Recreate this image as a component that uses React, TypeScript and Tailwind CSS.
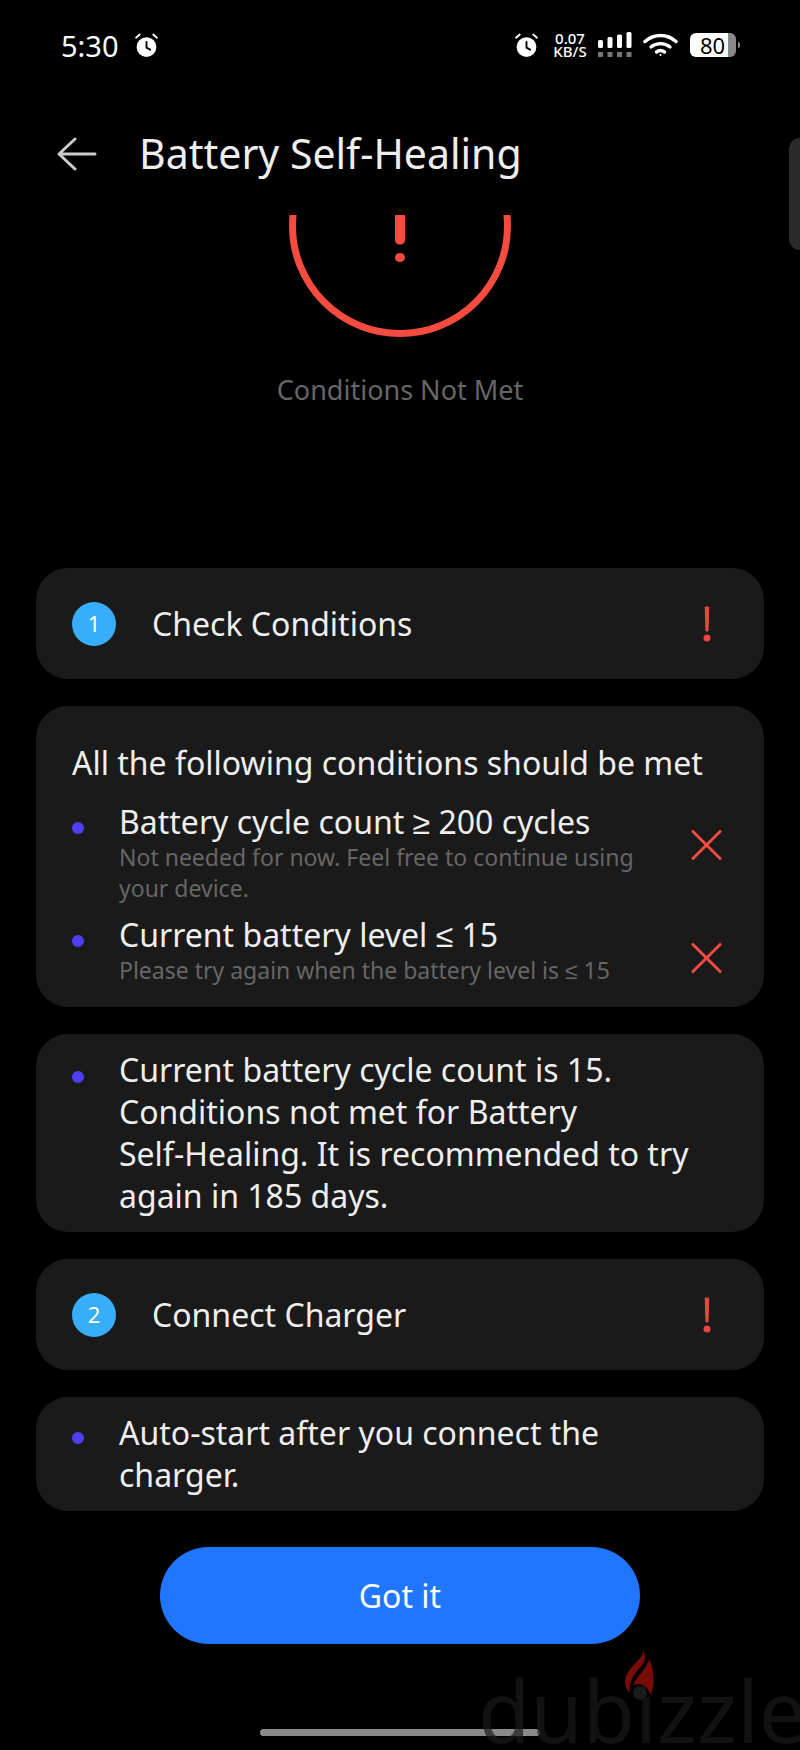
const sans = 'font-["Noto_Sans",sans-serif]';

const AlarmIcon = ({ className = '' }: { className?: string }) => (
  <svg viewBox="0 0 24 24" className={className}>
    <circle cx="12" cy="13.5" r="9.5" fill="#fff" />
    <path d="M12 8.5V14l3.5 2" fill="none" stroke="#000" strokeWidth="1.8" strokeLinecap="round" />
    <path d="M2 4.5 5.5 1.5M22 4.5 18.5 1.5" stroke="#fff" strokeWidth="1.8" strokeLinecap="round" />
  </svg>
);

const StatusBar = () => (
  <div className="flex h-[90px] items-center pl-[61px] pr-[60px] text-white">
    <span className="text-[29px] leading-none">5:30</span>
    <AlarmIcon className="ml-[15px] h-[25px] w-[25px]" />
    <AlarmIcon className="ml-auto h-[25px] w-[25px]" />
    <div className="ml-[14px] flex w-[34px] flex-col items-center whitespace-nowrap text-[15px] font-medium leading-[13px]">
      <span>0.07</span>
      <span>KB/S</span>
    </div>
    <svg viewBox="0 0 34 26" className="ml-[11px] h-[26px] w-[34px]">
      <rect x="0" y="8" width="5" height="8" rx="1.5" fill="#fff" />
      <rect x="9.5" y="5" width="5" height="11" rx="1.5" fill="#fff" />
      <rect x="19" y="2.5" width="5" height="13.5" rx="1.5" fill="#fff" />
      <rect x="28.5" y="0" width="5" height="16" rx="1.5" fill="#fff" />
      <rect x="0" y="20" width="5" height="5" fill="#777" />
      <rect x="9.5" y="20" width="5" height="5" fill="#777" />
      <rect x="19" y="20" width="5" height="5" fill="#777" />
      <rect x="28.5" y="20" width="5" height="5" fill="#777" />
    </svg>
    <svg viewBox="0 0 35 24" className="ml-[11px] h-[24px] w-[35px]" fill="none" stroke="#fff" strokeWidth="3.4" strokeLinecap="round">
      <path d="M2 8.5C11 .5 24 .5 33 8.5" />
      <path d="M8 14c5.500-4.500 13.500-4.500 19 0" />
      <path d="M13.500 19c2.500-1.800 5.500-1.800 8 0" />
      <circle cx="17.500" cy="22" r="1" fill="#fff" stroke="none" />
    </svg>
    <div className="ml-[12px] h-[24px] w-[46px] rounded-[6px] border-r-[8px] border-[#888] bg-white pl-[10px] text-[22px] leading-[24px] text-black">
      80
    </div>
    <div className="ml-[2px] h-[6px] w-[2px] rounded-r-full bg-[#888]" />
  </div>
);

const Ring = () => (
  <div className="flex flex-col items-center">
    <svg viewBox="0 0 222 122" className="h-[122px] w-[222px]">
      <circle cx="111" cy="11" r="107.500" fill="none" stroke="#f64c40" strokeWidth="7" />
      <path d="M106 0h10v25c0 6-10 6-10 0Z" fill="#f64c40" />
      <ellipse cx="111" cy="42.500" rx="5" ry="4.500" fill="#f64c40" />
    </svg>
    <p className="mt-[35px] text-[27px] leading-[36px] text-[#666]">Conditions Not Met</p>
  </div>
);

const StepCard = ({ num, label }: { num: number; label: string }) => (
  <div className="flex h-[111px] items-center rounded-[32px] bg-[#1a1a1a] pl-[36px] pr-[53px]">
    <div className="flex h-[44px] w-[44px] items-center justify-center rounded-full bg-[#38aefb] text-[22px] text-white">{num}</div>
    <span className="ml-[36px] flex-1 text-[32px] text-[#eee]">{label}</span>
    <svg viewBox="0 0 8 36" className="h-[36px] w-[8px]">
      <path d="M2.200 1h3.600L5 25H3Z" fill="#e8483d" stroke="#e8483d" strokeWidth="1" strokeLinejoin="round" />
      <circle cx="4" cy="32" r="3.500" fill="#e8483d" />
    </svg>
  </div>
);

const Dot = ({ className = '' }: { className?: string }) => (
  <div className={`h-[12px] w-[12px] shrink-0 rounded-full bg-[#4f3ff0] ${className}`} />
);

const Cross = () => (
  <svg viewBox="0 0 32 30" className="mt-[28px] h-[30px] w-[31px] shrink-0" fill="none" stroke="#f64c40" strokeWidth="3" strokeLinecap="round">
    <path d="M2 1 30 29M30 1 2 29" />
  </svg>
);

const Condition = ({ title, note }: { title: string; note: string }) => (
  <div className="flex">
    <Dot className="mt-[20px]" />
    <div className="ml-[35px] flex-1">
      <p className="text-[32px] leading-[40px] text-[#eee]">{title}</p>
      <p className="max-w-[540px] text-[23px] leading-[31px] text-[#666]">{note}</p>
    </div>
    <Cross />
  </div>
);

export default function App() {
  return (
    <div className={`relative h-[1750px] w-[800px] overflow-hidden bg-black ${sans}`}>
      <StatusBar />

      <header className="mt-[26px] flex h-[76px] items-center pl-[57px]">
        <svg viewBox="0 0 40 34" className="h-[34px] w-[40px]" fill="none" stroke="#ccc" strokeWidth="3" strokeLinecap="round" strokeLinejoin="round">
          <path d="M18 2 2 17l16 15M2 17h36" />
        </svg>
        <h1 className="ml-[42px] text-[41px] font-normal text-[#eee]">Battery Self-Healing</h1>
      </header>

      <div className="mt-[23px]">
        <Ring />
      </div>

      <main className="mt-[160px] flex flex-col gap-[27px] px-[36px]">
        <StepCard num={1} label="Check Conditions" />

        <section className="h-[301px] rounded-[32px] bg-[#1a1a1a] pl-[36px] pr-[42px] pt-[37px]">
          <p className="whitespace-nowrap text-[32px] leading-[40px] text-[#eee]">All the following conditions should be met</p>
          <div className="mt-[19px] flex flex-col gap-[11px]">
            <Condition title="Battery cycle count ≥ 200 cycles" note="Not needed for now. Feel free to continue using your device." />
            <Condition title="Current battery level ≤ 15" note="Please try again when the battery level is ≤ 15" />
          </div>
        </section>

        <section className="flex h-[198px] rounded-[32px] bg-[#1a1a1a] pl-[36px] pr-[45px] pt-[15px]">
          <Dot className="mt-[22px]" />
          <p className="ml-[35px] text-[32px] leading-[42px] text-[#eee]">
            Current battery cycle count is 15. Conditions not met for Battery <span className="whitespace-nowrap">Self-Healing.</span> It is recommended to try again in 185 days.
          </p>
        </section>

        <StepCard num={2} label="Connect Charger" />

        <section className="flex h-[114px] rounded-[32px] bg-[#1a1a1a] pl-[36px] pr-[45px] pt-[15px]">
          <Dot className="mt-[20px]" />
          <p className="ml-[35px] text-[32px] leading-[42px] text-[#eee]">Auto-start after you connect the charger.</p>
        </section>
      </main>

      <div className="mt-[36px] flex justify-center">
        <button className="h-[97px] w-[480px] rounded-full bg-[#2176ff] text-[32px] text-white">Got it</button>
      </div>

      <div className="mx-auto mt-[85px] h-[7px] w-[280px] rounded-full bg-[#8a8a8a]" />

      {/* poignée de bord et filigrane */}
      <div className="absolute right-0 top-[138px] h-[112px] w-[11px] rounded-l-[12px] bg-[#2a2a2a]" />
      <span className="absolute left-[478px] top-[1672px] whitespace-nowrap text-[85px] leading-[76px] text-[#1a1a1a]/70">dubizzle</span>
      <svg viewBox="0 0 30 50" className="absolute left-[624px] top-[1650px] h-[50px] w-[30px]">
        <path d="M19 0C20 8 8 14 3 24C-1 31 2 40 6 43C4 32 10 24 19 14C22 10 21 5 19 0Z" fill="#7a0c08" />
        <path d="M25 9C24 18 12 26 9 36C12 33 20 33 23 38L27 45C31 32 30 18 25 9Z" fill="#7a0c08" />
        <circle cx="16" cy="43" r="7" fill="#1a1a1a" />
      </svg>
    </div>
  );
}
